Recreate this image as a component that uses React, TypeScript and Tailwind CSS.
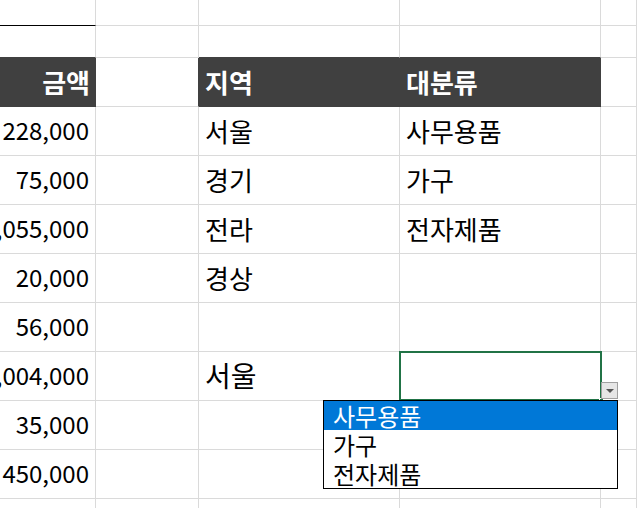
import React from "react";

const font = { fontFamily: '"Noto Sans CJK KR", "Noto Sans", sans-serif' };

const rows: { amount: string; region: string; category: string }[] = [
  { amount: "228,000", region: "서울", category: "사무용품" },
  { amount: "75,000", region: "경기", category: "가구" },
  { amount: "1,055,000", region: "전라", category: "전자제품" },
  { amount: "20,000", region: "경상", category: "" },
  { amount: "56,000", region: "", category: "" },
  { amount: "1,004,000", region: "서울", category: "" },
  { amount: "35,000", region: "", category: "" },
  { amount: "450,000", region: "", category: "" },
  { amount: "", region: "", category: "" },
];

const listItems = ["사무용품", "가구", "전자제품"];

const cols = "grid grid-cols-[96px_103px_201px_201px_1fr]";
const cell = "border-r border-b border-[#dadada]";

export default function App() {
  return (
    <div className="relative w-[637px] h-[508px] overflow-hidden bg-white text-black" style={font}>
      {/* top blank rows */}
      <div className={`${cols} h-[26px]`}>
        <div className="border-r border-[#dadada] border-b border-b-black" />
        <div className={cell} />
        <div className={cell} />
        <div className={cell} />
        <div className={cell} />
      </div>
      <div className={`${cols} h-[32px]`}>
        <div className="border-r border-[#dadada] border-b border-b-[#404040]" />
        <div className={cell} />
        <div className="border-r border-[#dadada] border-b border-b-[#404040]" />
        <div className="border-r border-[#dadada] border-b border-b-[#404040]" />
        <div className={cell} />
      </div>

      {/* header */}
      <div className={`${cols} h-[49px] text-[26px] font-bold`}>
        <div className="bg-[#404040] text-white border-b border-[#404040] flex items-center justify-end pr-[6px] pb-[2px]">
          금액
        </div>
        <div className="border-r border-r-[#404040] border-b border-[#dadada]" />
        <div className="bg-[#404040] text-white border-b border-[#404040] flex items-center pl-[6px] pb-[2px]">
          지역
        </div>
        <div className="bg-[#404040] text-white border-r border-r-[#404040] border-b border-[#404040] flex items-center pl-[6px] pb-[2px]">
          대분류
        </div>
        <div className={cell} />
      </div>

      {/* data rows */}
      {rows.map((r, i) => (
        <div key={i} className={`${cols} h-[49px]`}>
          <div className={`${cell} text-[24px] flex items-center justify-end pr-[6px] pb-[2px] whitespace-nowrap overflow-hidden`}>
            {r.amount}
          </div>
          <div className={cell} />
          <div className={`${cell} flex items-center pl-[6px] pb-[2px] ${i === 5 ? "text-[28px]" : "text-[26px]"}`}>
            {r.region}
          </div>
          <div className={`${cell} text-[26px] flex items-center pl-[6px] pb-[2px]`}>{r.category}</div>
          <div className={cell} />
        </div>
      ))}

      {/* active cell */}
      <div className="absolute left-[399px] top-[351px] w-[203px] h-[50px] border-2 border-[#217346]" />
      <div className="absolute left-[599px] top-[398px] w-[5px] h-[5px] bg-[#217346] border border-white" />

      {/* dropdown button */}
      <div className="absolute left-[601px] top-[382px] w-[17px] h-[17px] bg-[#e6e6e6] border border-[#a0a0a0] flex items-center justify-center">
        <div className="w-0 h-0 border-l-[4px] border-r-[4px] border-t-[4px] border-l-transparent border-r-transparent border-t-[#555]" />
      </div>

      {/* dropdown list */}
      <div className="absolute left-[323px] top-[400px] w-[295px] h-[89px] bg-white border border-black text-[24px] leading-[29px]">
        {listItems.map((t, i) => (
          <div key={t} className={`h-[29px] pl-[9px] ${i === 0 ? "bg-[#0078d7] text-white" : ""}`}>
            {t}
          </div>
        ))}
      </div>
    </div>
  );
}
